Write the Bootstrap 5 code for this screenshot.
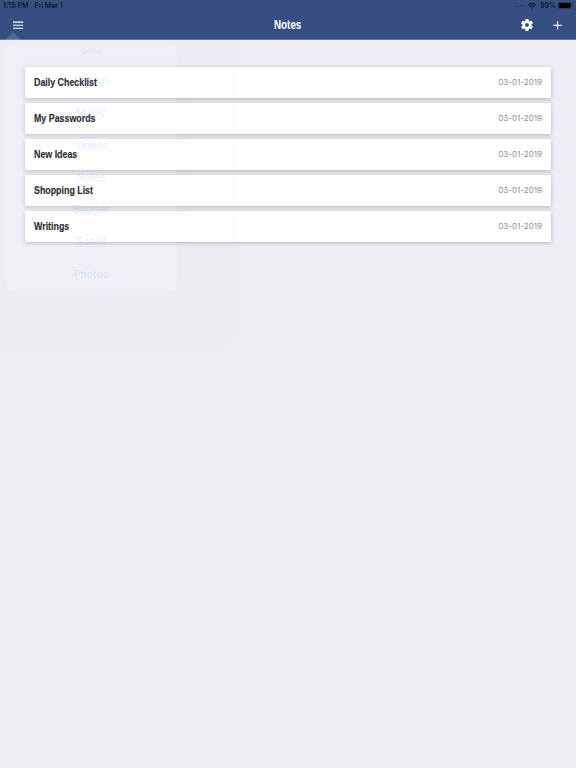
<!DOCTYPE html>
<html lang="en">
<head>
<meta charset="utf-8">
<meta name="viewport" content="width=device-width, initial-scale=1">
<title>Notes</title>
<link href="https://cdn.jsdelivr.net/npm/bootstrap@5.3.0/dist/css/bootstrap.min.css" rel="stylesheet">
<style>
body{background:#efeef4;font-family:Inter,"Liberation Sans",sans-serif;height:768px;overflow:hidden}
.topbar{background:#374e80;height:40px;border-bottom:1px solid #65779e}
.status{height:11px;font-size:7px;line-height:12px;color:#0b1020;padding:0 3px 0 3px;font-weight:500}
.status-time{letter-spacing:.08px}
.status-date{margin-left:6px;letter-spacing:-.02px}
.tools{height:28px;padding:0 12px;grid-template-columns:1fr auto 1fr}
.condensed{font-family:"Liberation Sans",sans-serif;font-weight:700;white-space:nowrap;display:inline-block;transform:scaleX(.78);transform-origin:left center}
.page-title{font-size:12px;color:#fff;line-height:28px;transform:scaleX(.82);transform-origin:center}
.icon-btn{line-height:0}
.plus{margin-left:19px}
.battery{margin-left:2px}
.notes{padding:26.6px 25px 0;gap:5px}
.note{height:31px;background:#fff;border-radius:1px;box-shadow:0 1px 4px rgba(70,70,85,.36);padding:0 9px}
.note-name{font-size:11.35px;line-height:18px;color:#0b0b0d;-webkit-text-stroke:.15px #0b0b0d}
.note-date{font-size:8px;line-height:12px;color:#8e8e90;margin-top:-1px;letter-spacing:.02px}
.ghost{left:5px;top:45px;width:172px;height:246px;border-radius:8px;background:rgba(246,247,251,.12);box-shadow:0 0 0 12px rgba(100,100,120,.006),0 0 0 60px rgba(100,100,120,.006);pointer-events:none}
.ghost-head{height:20px;padding-top:1px;font-size:7px;line-height:12px;color:rgba(125,130,145,.16)}
.ghost-item{height:32.3px;line-height:32px;font-size:10.5px;color:rgba(50,155,255,.19)}
.pointer{left:5px;top:32px;width:16px;height:8px;background:rgba(255,255,255,.15);clip-path:polygon(50% 0,100% 100%,0 100%)}
</style>
</head>
<body>
<header class="topbar position-relative">
  <div class="status d-flex justify-content-between align-items-center">
    <div class="d-flex"><span class="status-time">1:15 PM</span><span class="status-date">Fri Mar 1</span></div>
    <div class="d-flex align-items-center">
      <svg width="9" height="3" viewBox="0 0 9 3" fill="#182443" opacity=".75"><circle cx="1" cy="2.2" r=".6"/><circle cx="3.3" cy="2.2" r=".6"/><circle cx="5.6" cy="2.2" r=".6"/><circle cx="7.9" cy="2.2" r=".6"/></svg>
      <svg class="mx-1" width="8" height="6" viewBox="0 0 8 6" fill="none" stroke="#0b1020" stroke-width="1.2"><path d="M.2 2.1Q4-1.1 7.8 2.1M1.7 3.7Q4 1.8 6.3 3.7"/><path d="M2.9 4.7Q4 3.8 5.1 4.7L4 5.9Z" fill="#0b1020" stroke="none"/></svg>
      <span>99%</span>
      <svg class="battery" width="15" height="7" viewBox="0 0 15 7"><rect x=".3" y=".3" width="12.9" height="6.2" rx="1.5" fill="none" stroke="#1d2a4b" stroke-width=".5"/><rect x=".9" y=".9" width="11.7" height="5" rx="1" fill="#000"/><path d="M13.8 2.2v2.4q1-.4 1-1.2t-1-1.2" fill="#1d2a4b"/></svg>
    </div>
  </div>
  <div class="tools d-grid align-items-center">
    <div class="icon-btn"><svg width="12" height="12" viewBox="0 0 12 12" stroke="#fff" stroke-width="1.1"><path d="M1 3.1h10.2M1 6.2h10.2M1 9.3h10.2"/></svg></div>
    <div class="condensed page-title">Notes</div>
    <div class="icon-btn d-flex justify-content-end align-items-center">
      <svg width="12" height="12" viewBox="2 2 20 20" fill="#fff"><path d="M19.43 12.98c.04-.32.07-.64.07-.98s-.03-.66-.07-.98l2.11-1.65c.19-.15.24-.42.12-.64l-2-3.46c-.12-.22-.39-.3-.61-.22l-2.49 1c-.52-.4-1.08-.73-1.69-.98l-.38-2.65C14.46 2.18 14.25 2 14 2h-4c-.25 0-.46.18-.49.42l-.38 2.65c-.61.25-1.17.59-1.69.98l-2.49-1c-.23-.09-.49 0-.61.22l-2 3.46c-.13.22-.07.49.12.64l2.11 1.65c-.04.32-.07.65-.07.98s.03.66.07.98l-2.11 1.65c-.19.15-.24.42-.12.64l2 3.46c.12.22.39.3.61.22l2.49-1c.52.4 1.08.73 1.69.98l.38 2.65c.03.24.24.42.49.42h4c.25 0 .46-.18.49-.42l.38-2.65c.61-.25 1.17-.59 1.69-.98l2.49 1c.23.09.49 0 .61-.22l2-3.46c.12-.22.07-.49-.12-.64zM12 15.2c-1.77 0-3.2-1.43-3.2-3.2s1.43-3.2 3.2-3.2 3.2 1.43 3.2 3.2-1.43 3.2-3.2 3.2z"/></svg>
      <svg class="plus" width="12" height="12" viewBox="0 0 12 12" stroke="#fff" stroke-width="1.1"><path d="M1.4 6.4h8.4M5.6 2.2v8.4"/></svg>
    </div>
  </div>
  <div class="pointer position-absolute"></div>
</header>
<main class="notes d-flex flex-column">
  <div class="note d-flex justify-content-between align-items-center"><span class="note-name condensed">Daily Checklist</span><span class="note-date">03-01-2019</span></div>
  <div class="note d-flex justify-content-between align-items-center"><span class="note-name condensed">My Passwords</span><span class="note-date">03-01-2019</span></div>
  <div class="note d-flex justify-content-between align-items-center"><span class="note-name condensed">New Ideas</span><span class="note-date">03-01-2019</span></div>
  <div class="note d-flex justify-content-between align-items-center"><span class="note-name condensed">Shopping List</span><span class="note-date">03-01-2019</span></div>
  <div class="note d-flex justify-content-between align-items-center"><span class="note-name condensed">Writings</span><span class="note-date">03-01-2019</span></div>
</main>
<div class="ghost position-absolute text-center">
  <div class="ghost-head">Select</div>
  <div class="ghost-item">Search</div>
  <div class="ghost-item">Music</div>
  <div class="ghost-item">Videos</div>
  <div class="ghost-item">Notes</div>
  <div class="ghost-item">Budget</div>
  <div class="ghost-item">Social</div>
  <div class="ghost-item">Photos</div>
</div>
<script src="https://cdn.jsdelivr.net/npm/bootstrap@5.3.0/dist/js/bootstrap.bundle.min.js"></script>
</body>
</html>
